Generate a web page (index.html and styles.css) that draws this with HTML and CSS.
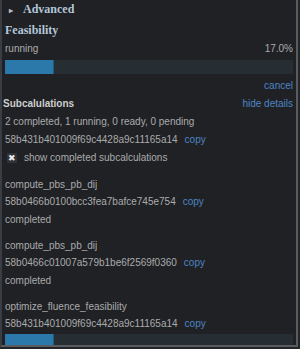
FILE: index.html
```html
<!DOCTYPE html>
<html>
<head>
<meta charset="utf-8">
<link rel="stylesheet" href="styles.css">
</head>
<body>
<div class="panel">
  <div class="adv"><span class="tri">&#9656;</span>Advanced</div>
  <div class="title">Feasibility</div>
  <div class="row status"><span>running</span><span>17.0%</span></div>
  <div class="bar"><div class="fill" style="width:17%"></div></div>
  <div class="row right cancel"><a class="link">cancel</a></div>
  <div class="row"><span class="sub">Subcalulations</span><a class="link">hide details</a></div>
  <div class="line">2 completed, 1 running, 0 ready, 0 pending</div>
  <div class="line">58b431b401009f69c4428a9c11165a14<a class="link copy">copy</a></div>
  <div class="line check"><span class="box">&#10006;</span>show completed subcalculations</div>

  <div class="group">
    <div class="gline">compute_pbs_pb_dij</div>
    <div class="gline">58b0466b0100bcc3fea7bafce745e754<a class="link copy">copy</a></div>
    <div class="gline">completed</div>
  </div>
  <div class="group">
    <div class="gline">compute_pbs_pb_dij</div>
    <div class="gline">58b0466c01007a579b1be6f2569f0360<a class="link copy">copy</a></div>
    <div class="gline">completed</div>
  </div>
  <div class="group">
    <div class="gline">optimize_fluence_feasibility</div>
    <div class="gline">58b431b401009f69c4428a9c11165a14<a class="link copy">copy</a></div>
    <div class="bar small"><div class="fill" style="width:17%"></div></div>
  </div>
</div>
</body>
</html>
```
FILE: styles.css
```css
html, body {
  margin: 0;
  padding: 0;
  background: #232529;
}
body {
  width: 300px;
  height: 349px;
  overflow: hidden;
  font-family: "Liberation Sans", Arial, sans-serif;
  font-size: 10px;
  color: #ababab;
}
.panel {
  box-sizing: border-box;
  width: 298px;
  height: 347px;
  overflow: hidden;
  background: #1f2125;
  border-left: 2px solid #3a3d42;
  border-right: 2px solid #585c61;
  border-bottom: 2px solid #585c61;
  padding: 0 3px;
}
.adv {
  font-family: "Liberation Serif", "Times New Roman", serif;
  font-weight: bold;
  font-size: 12px;
  line-height: 18px;
  color: #b4c6d9;
  padding-left: 4px;
}
.tri {
  display: inline-block;
  font-size: 8px;
  color: #b9bcc0;
  width: 14px;
}
.title {
  font-family: "Liberation Serif", "Times New Roman", serif;
  font-weight: bold;
  font-size: 12px;
  line-height: 18px;
  color: #b4c6d9;
  margin-top: 1px;
}
.row {
  display: flex;
  justify-content: space-between;
  line-height: 18px;
}
.row.right {
  justify-content: flex-end;
}
.status {
  margin-top: 1px;
}
.cancel {
  margin-top: 3px;
}
.bar {
  height: 14px;
  margin-top: 2px;
  background: #262d33;
}
.bar.small {
  height: 11px;
  margin-top: 1.5px;
}
.fill {
  height: 100%;
  background: #2b79ab;
  box-shadow: inset -1px 0 0 #1f5a80;
}
.link {
  color: #4f84c2;
}
.sub {
  font-weight: bold;
  color: #cdcdcd;
  margin-left: -2px;
}
.line {
  line-height: 18px;
}
.copy {
  margin-left: 7px;
}
.check {
  display: flex;
  align-items: center;
}
.box {
  display: inline-flex;
  align-items: center;
  justify-content: center;
  width: 10px;
  height: 10px;
  margin-left: 2px;
  margin-right: 7px;
  background: #2f3237;
  color: #ececec;
  font-size: 9px;
  line-height: 10px;
}
.group {
  margin-top: 8.5px;
}
.gline {
  line-height: 17.5px;
}
```
